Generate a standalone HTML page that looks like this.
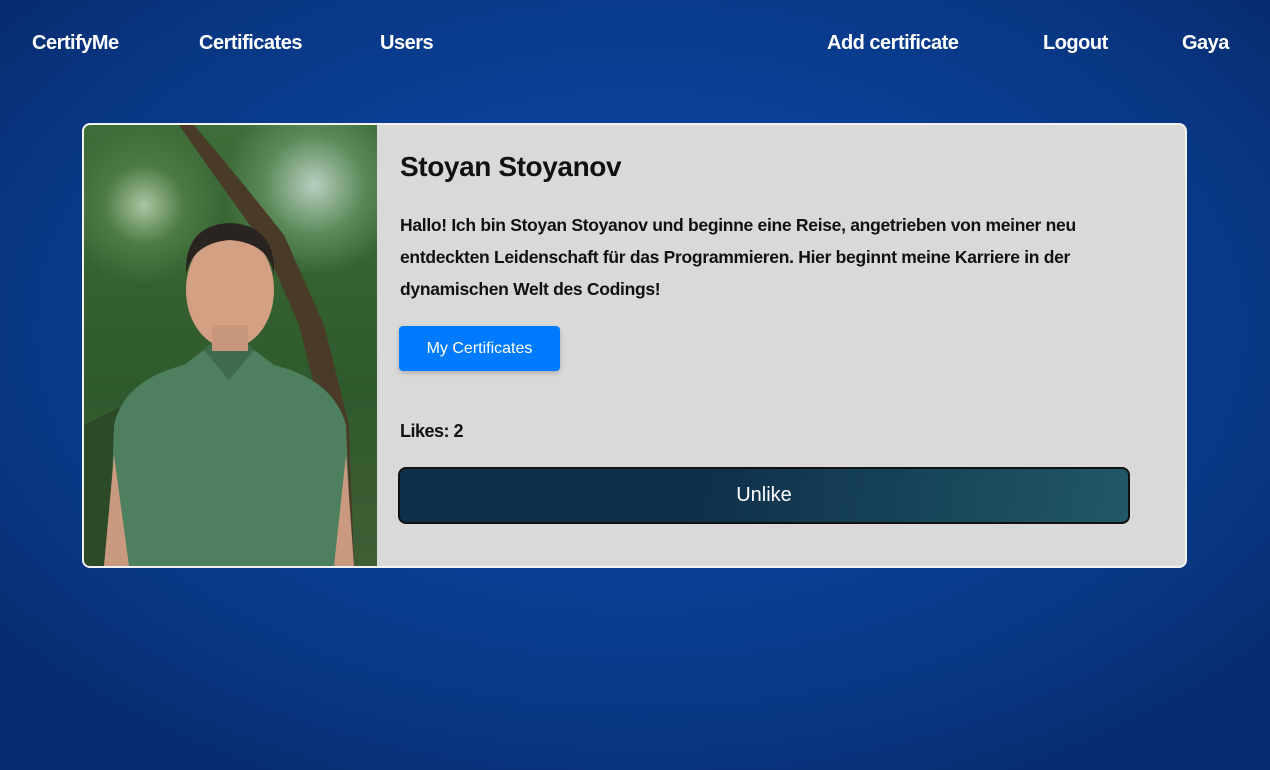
<!DOCTYPE html>
<html><head><meta charset="utf-8"><style>
*{margin:0;padding:0;box-sizing:border-box}
body{width:1270px;height:770px;overflow:hidden;font-family:"Liberation Sans",sans-serif;
background:radial-gradient(ellipse 800px 500px at 640px 330px,#0c47a6 0%,#0a3f94 50%,#083580 85%,#072d70 100%);position:relative}
.nav a{position:absolute;top:32px;color:#fff;font-weight:bold;font-size:20px;text-decoration:none;letter-spacing:-0.5px}
.card{position:absolute;left:82px;top:123px;width:1105px;height:445px;border:2px solid #f2f2f2;border-radius:8px;background:#d9d9d9;overflow:hidden}
.photo{position:absolute;left:0;top:0;width:293px;height:441px;overflow:hidden;
background:radial-gradient(circle at 60px 80px,#a9c6a0 0,#4d7a45 40px,transparent 80px),radial-gradient(circle at 230px 60px,#b7cfbf 0,#5b8a58 50px,transparent 90px),linear-gradient(180deg,#3f6d3a,#2f5a2c 60%,#3f5f35)}
h1{position:absolute;left:316px;top:26px;font-size:28px;color:#111;font-weight:bold;letter-spacing:-0.4px}
p{position:absolute;left:316px;top:84px;width:700px;font-size:17.5px;line-height:32px;color:#111;font-weight:bold;letter-spacing:-0.3px}
.btn{position:absolute;left:315px;top:201px;width:161px;height:45px;background:#007bff;border-radius:4px;color:#fff;font-size:16px;text-align:center;line-height:45px;box-shadow:0 2px 5px rgba(0,0,0,.2)}
.likes{position:absolute;left:316px;top:296px;font-size:18px;font-weight:bold;color:#111;letter-spacing:-0.5px}
.unlike{position:absolute;left:314px;top:342px;width:732px;height:57px;border:2px solid #111;border-radius:8px;background:linear-gradient(100deg,#0e2f4a 40%,#205866 100%);color:#fff;font-size:20px;text-align:center;line-height:53px}
</style></head><body>
<div class="nav"><a style="left:32px">CertifyMe</a><a style="left:199px">Certificates</a><a style="left:380px">Users</a><a style="left:827px">Add certificate</a><a style="left:1043px">Logout</a><a style="left:1182px">Gaya</a></div>
<div class="card">
<div class="photo">
<svg width="293" height="441" viewBox="0 0 293 441">
<path d="M110 0 L160 60 L200 110 L240 200 L265 300 L270 441 L250 441 L240 300 L215 200 L180 120 L130 50 L95 0Z" fill="#4a3a28"/>
<path d="M0 300 L40 280 L40 441 L0 441Z" fill="#2c4a28"/>
<path d="M25 441 L30 300 Q40 255 100 240 L120 225 L170 225 L190 240 Q250 255 262 300 L268 441Z" fill="#4e7f5e"/>
<path d="M30 330 L20 441 L45 441 Z" fill="#c99a7f"/>
<path d="M262 330 L270 441 L250 441Z" fill="#c99a7f"/>
<path d="M120 225 L145 255 L170 225 L160 215 L130 215Z" fill="#3f6a4d"/>
<ellipse cx="146" cy="165" rx="44" ry="58" fill="#d4a084"/>
<path d="M102 150 Q100 100 146 98 Q192 100 190 150 Q185 118 146 115 Q108 118 102 150Z" fill="#2a2420"/>
<rect x="128" y="200" width="36" height="26" fill="#c7967b"/>
</svg>
</div>
<h1>Stoyan Stoyanov</h1>
<p>Hallo! Ich bin Stoyan Stoyanov und beginne eine Reise, angetrieben von meiner neu<br>entdeckten Leidenschaft für das Programmieren. Hier beginnt meine Karriere in der<br>dynamischen Welt des Codings!</p>
<div class="btn">My Certificates</div>
<div class="likes">Likes: 2</div>
<div class="unlike">Unlike</div>
</div>
</body></html>
